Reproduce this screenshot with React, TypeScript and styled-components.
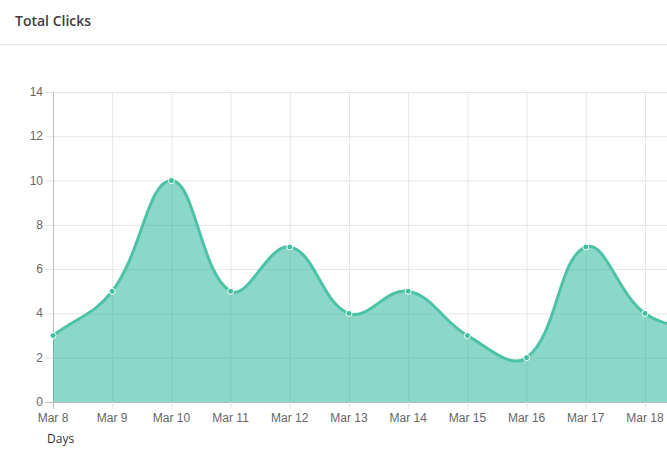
import React from "react";
import styled, { createGlobalStyle } from "styled-components";

const G = createGlobalStyle`body{margin:0;background:#fff;font-family:"Open Sans",sans-serif;}`;
const Card = styled.div`width:667px;height:466px;overflow:hidden;display:flex;flex-direction:column;`;
const Header = styled.div`height:45px;box-sizing:border-box;border-bottom:1px solid #e6e6e6;padding:11px 15px 0;font-size:14px;font-weight:600;color:#3d3d3d;`;
const Chart = styled.svg`display:block;`;

const vals = [3, 5, 10, 5, 7, 4, 5, 3, 2, 7, 4, 3.2];
const X = (i: number) => 53 + 59.2 * i;
const Y = (v: number) => 357 - 22.143 * v;
const pts = vals.map((v, i) => [X(i), Y(v)]);

function path() {
  const t = 0.4;
  const cps = pts.map((p, i) => {
    const prev = pts[i - 1] || p, next = pts[i + 1] || p;
    const d01 = Math.hypot(p[0] - prev[0], p[1] - prev[1]);
    const d12 = Math.hypot(next[0] - p[0], next[1] - p[1]);
    const s01 = d01 / (d01 + d12 || 1), s12 = d12 / (d01 + d12 || 1);
    const fa = t * s01, fb = t * s12;
    return {
      p: [p[0] - fa * (next[0] - prev[0]), p[1] - fa * (next[1] - prev[1])],
      n: [p[0] + fb * (next[0] - prev[0]), p[1] + fb * (next[1] - prev[1])],
    };
  });
  let d = `M${pts[0][0]},${pts[0][1]}`;
  for (let i = 1; i < pts.length; i++) {
    d += ` C${cps[i - 1].n[0]},${cps[i - 1].n[1]} ${cps[i].p[0]},${cps[i].p[1]} ${pts[i][0]},${pts[i][1]}`;
  }
  return d;
}

export default function App() {
  const d = path();
  const last = pts[pts.length - 1];
  const days = Array.from({ length: 11 }, (_, i) => `Mar ${8 + i}`);
  return (
    <Card>
      <G />
      <Header>Total Clicks</Header>
      <Chart width={667} height={420}>
        {[0, 2, 4, 6, 8, 10, 12, 14].map((v) => (
          <g key={v}>
            <line x1={45} x2={667} y1={Y(v) + 0.5} y2={Y(v) + 0.5} stroke={v === 0 ? "#bdbdbd" : "#e6e6e6"} />
            <text x={43} y={Y(v) + 4} textAnchor="end" fontFamily="Liberation Sans, Arial, sans-serif" fontSize={12} fill="#666">{v}</text>
          </g>
        ))}
        {days.map((_, i) => (
          <line key={i} x1={X(i) + 0.5} x2={X(i) + 0.5} y1={Y(14)} y2={Y(0) + 7} stroke={i === 0 ? "#bdbdbd" : "#e6e6e6"} />
        ))}
        <path d={`${d} L${last[0]},${Y(0)} L${pts[0][0]},${Y(0)} Z`} fill="rgba(26,178,145,0.5)" />
        <path d={d} fill="none" stroke="#4cc3a5" strokeWidth={3} />
        {pts.slice(0, 11).map((p, i) => (
          <circle key={i} cx={p[0]} cy={p[1]} r={3} fill="#3fbf9f" stroke="#fff" strokeWidth={1} />
        ))}
        {days.map((t, i) => (
          <text key={t} x={X(i)} y={377} textAnchor="middle" fontFamily="Liberation Sans, Arial, sans-serif" fontSize={12} fill="#666">{t}</text>
        ))}
        <text x={47} y={398} fontFamily="Open Sans, sans-serif" fontSize={12} fill="#333">Days</text>
      </Chart>
    </Card>
  );
}
